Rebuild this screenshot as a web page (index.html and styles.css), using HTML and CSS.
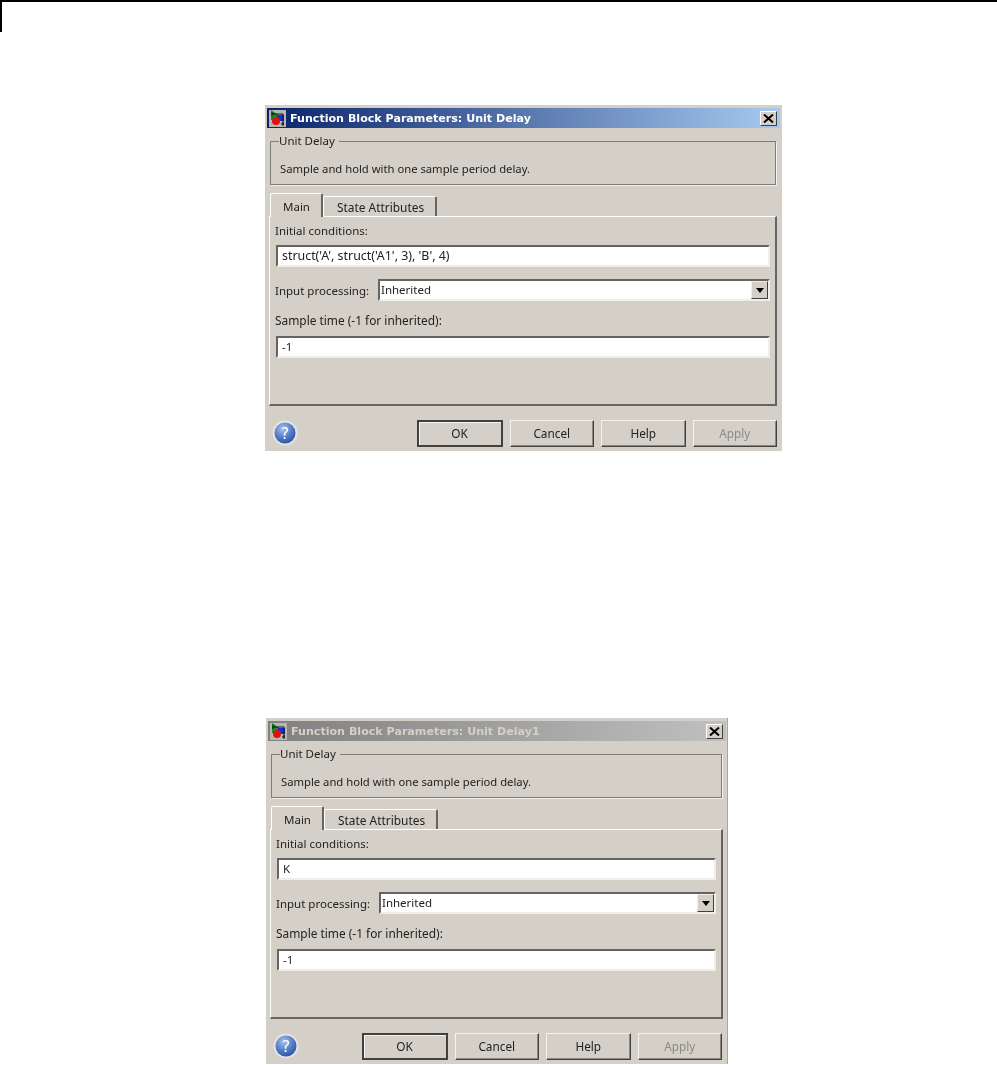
FILE: index.html
```html
<html>
  <head>
    <title>Function Block Parameters: Unit Delay</title>
    <link rel="stylesheet" href="styles.css">
  </head>
  <body>
    <div class="page-corner"></div>

    <!-- Active dialog -->
    <div class="dialog dialog-first">
      <div class="titlebar">
        <svg class="window-icon" width="17" height="17" viewBox="0 0 17 17">
          <rect width="17" height="17" fill="#b8b6b0"/>
          <path d="M2 0 L11 6 L11 10 L2 10 Z" fill="#1c8a2c"/>
          <rect x="8" y="5" width="7" height="6" fill="#1230d8"/>
          <circle cx="7" cy="11" r="4" fill="#e01010"/>
          <path d="M3 4 H14 V14 M12 14 H15 M14 12 V16 M3 2 V6" fill="none" stroke="#111" stroke-width="1"/>
        </svg>
        <span class="title-text">Function Block Parameters: Unit Delay</span>
        <span class="close-btn">
          <svg width="11" height="9" viewBox="0 0 11 9"><path d="M1 0.5 L10 8.5 M10 0.5 L1 8.5" stroke="#000" stroke-width="2"/></svg>
        </span>
      </div>
      <fieldset class="group">
        <legend>Unit Delay</legend>
        <p>Sample and hold with one sample period delay.</p>
      </fieldset>
      <div class="tabs">
        <div class="tab tab-active">Main</div>
        <div class="tab">State Attributes</div>
      </div>
      <div class="tab-panel">
        <div class="field-label">Initial conditions:</div>
        <div class="text-box text-box-long">struct('A', struct('A1', 3), 'B', 4)</div>
        <div class="select-row">
          <span class="select-label">Input processing:</span>
          <div class="text-box select-box">
            <span>Inherited</span>
            <span class="select-arrow"></span>
          </div>
        </div>
        <div class="field-label sample-label">Sample time (-1 for inherited):</div>
        <div class="text-box">-1</div>
      </div>
      <div class="button-row">
        <svg class="help-icon" width="26" height="26" viewBox="0 0 26 26">
          <defs>
            <radialGradient id="helpFill" cx="40%" cy="30%" r="75%">
              <stop offset="0" stop-color="#a9c2ea"/>
              <stop offset="0.6" stop-color="#4f79c4"/>
              <stop offset="1" stop-color="#2c4f9c"/>
            </radialGradient>
          </defs>
          <circle cx="13" cy="13" r="12.5" fill="#e4e4e6"/>
          <circle cx="13" cy="13" r="10.5" fill="url(#helpFill)"/>
          <text x="13" y="19" class="help-mark">?</text>
        </svg>
        <div class="btn btn-default">OK</div>
        <div class="btn">Cancel</div>
        <div class="btn">Help</div>
        <div class="btn btn-disabled">Apply</div>
      </div>
    </div>

    <!-- Inactive dialog -->
    <div class="dialog dialog-second">
      <div class="titlebar titlebar-inactive">
        <svg class="window-icon" width="17" height="17" viewBox="0 0 17 17">
          <rect width="17" height="17" fill="#b8b6b0"/>
          <path d="M2 0 L11 6 L11 10 L2 10 Z" fill="#1c8a2c"/>
          <rect x="8" y="5" width="7" height="6" fill="#1230d8"/>
          <circle cx="7" cy="11" r="4" fill="#e01010"/>
          <path d="M3 4 H14 V14 M12 14 H15 M14 12 V16 M3 2 V6" fill="none" stroke="#111" stroke-width="1"/>
        </svg>
        <span class="title-text">Function Block Parameters: Unit Delay1</span>
        <span class="close-btn">
          <svg width="11" height="9" viewBox="0 0 11 9"><path d="M1 0.5 L10 8.5 M10 0.5 L1 8.5" stroke="#000" stroke-width="2"/></svg>
        </span>
      </div>
      <fieldset class="group">
        <legend>Unit Delay</legend>
        <p>Sample and hold with one sample period delay.</p>
      </fieldset>
      <div class="tabs">
        <div class="tab tab-active">Main</div>
        <div class="tab">State Attributes</div>
      </div>
      <div class="tab-panel">
        <div class="field-label">Initial conditions:</div>
        <div class="text-box">K</div>
        <div class="select-row">
          <span class="select-label">Input processing:</span>
          <div class="text-box select-box">
            <span>Inherited</span>
            <span class="select-arrow"></span>
          </div>
        </div>
        <div class="field-label sample-label">Sample time (-1 for inherited):</div>
        <div class="text-box">-1</div>
      </div>
      <div class="button-row">
        <svg class="help-icon" width="26" height="26" viewBox="0 0 26 26">
          <circle cx="13" cy="13" r="12.5" fill="#e4e4e6"/>
          <circle cx="13" cy="13" r="10.5" fill="url(#helpFill)"/>
          <text x="13" y="19" class="help-mark">?</text>
        </svg>
        <div class="btn btn-default">OK</div>
        <div class="btn">Cancel</div>
        <div class="btn">Help</div>
        <div class="btn btn-disabled">Apply</div>
      </div>
    </div>
  </body>
</html>
```

FILE: styles.css
```css
/* Page */
body {
  margin: 0;
  background-color: #fff;
  font-family: "Noto Sans", sans-serif;
  font-size: 11.5px;
  color: #222;
}
.page-corner {
  height: 30px;
  border-top: 2px solid #000;
  border-left: 2px solid #000;
}

/* Dialog window */
.dialog {
  box-sizing: border-box;
  height: 346px;
  padding: 3px 2px 0;
  background-color: #d4d0c8;
  overflow: hidden;
  filter: blur(0.35px);
}
.dialog-first {
  width: 517px;
  margin: 73px 0 0 265px;
}
.dialog-second {
  width: 462px;
  margin: 267px 0 0 266px;
  padding-right: 1px;
  border-right: 1px solid #a8a6a2;
}
.dialog-second .button-row {
  padding-right: 4px;
}

/* Title bar */
.titlebar {
  display: flex;
  align-items: center;
  height: 20px;
  padding: 0 3px 0 2px;
  background: linear-gradient(to right, #0a246a, #a6caf0);
}
.titlebar-inactive {
  background: linear-gradient(to right, #808080, #c0c0c0);
}
.titlebar-inactive .title-text {
  color: #d4d0c8;
}
.window-icon {
  flex: none;
}
.title-text {
  margin-left: 4px;
  font-family: "DejaVu Sans", sans-serif;
  font-size: 11.1px;
  font-weight: bold;
  color: #fff;
  white-space: nowrap;
}
.close-btn {
  display: flex;
  align-items: center;
  justify-content: center;
  box-sizing: border-box;
  width: 17px;
  height: 15px;
  margin-left: auto;
  background-color: #d4d0c8;
  border: 1px solid;
  border-color: #fff #404040 #404040 #fff;
}

/* Description group */
.group {
  box-sizing: border-box;
  height: 51px;
  margin: 6px 4px 0 3px;
  padding: 0 0 0 9px;
  border: 1px solid #7d7d7a;
  box-shadow: 1px 1px 0 #f2f0ec;
}
.group legend {
  height: 14px;
  padding: 0 4px 0 0;
  margin-left: -1px;
  line-height: 14px;
}
.group p {
  margin: 13px 0 0;
  font-size: 11.25px;
  line-height: 16px;
}

/* Tabs */
.tabs {
  display: flex;
  align-items: flex-end;
  height: 24px;
  margin: 7px 0 0 3px;
}
.tab {
  box-sizing: border-box;
  height: 20px;
  padding: 2px 0 0 13px;
  width: 114px;
  font-size: 11.9px;
  line-height: 16px;
  border-top: 1px solid #fff;
  border-left: 1px solid #fff;
  border-right: 2px solid #66645f;
  border-radius: 2px 2px 0 0;
}
.tab-active {
  position: relative;
  height: 24px;
  width: 53px;
  padding: 5px 0 0 12px;
  margin-bottom: -1px;
  font-size: 11.5px;
  background-color: #d4d0c8;
}
.tab-panel {
  box-sizing: border-box;
  height: 190px;
  margin: 0 3px 0 2px;
  padding: 5px 5px 0;
  border-top: 1px solid #fff;
  border-left: 1px solid #fff;
  border-right: 2px solid #66645f;
  border-bottom: 2px solid #66645f;
}

/* Fields */
.field-label {
  height: 17px;
  line-height: 17px;
  margin-bottom: 6px;
}
.sample-label {
  margin-top: 11px;
  margin-bottom: 7px;
  font-size: 11.9px;
}
.text-box {
  box-sizing: border-box;
  height: 22px;
  margin-left: 1px;
  padding-left: 4px;
  line-height: 18px;
  background-color: #fff;
  border: 2px solid;
  border-color: #66645f #f0eee9 #f0eee9 #66645f;
  color: #222;
}
.text-box-long {
  font-size: 12.4px;
}
.select-row {
  display: flex;
  align-items: center;
  margin-top: 12px;
}
.select-row .select-label {
  flex: none;
  width: 102px;
}
.select-box {
  flex: 1;
  display: flex;
  align-items: center;
  justify-content: space-between;
  margin-left: 1px;
  padding: 0 0 0 1px;
}
.select-arrow {
  display: flex;
  align-items: center;
  justify-content: center;
  box-sizing: border-box;
  width: 17px;
  height: 18px;
  background-color: #d4d0c8;
  border: 1px solid;
  border-color: #f0eee9 #404040 #404040 #f0eee9;
}
.select-arrow::after {
  content: "";
  border-top: 5px solid #000;
  border-left: 4px solid transparent;
  border-right: 4px solid transparent;
}

/* Bottom buttons */
.button-row {
  display: flex;
  align-items: center;
  height: 28px;
  margin-top: 13px;
  gap: 7px;
  padding: 0 3px 0 5px;
}
.help-icon {
  flex: none;
  margin-right: auto;
}
.help-mark {
  font-family: "DejaVu Sans", sans-serif;
  font-size: 16px;
  fill: #fff;
  text-anchor: middle;
}
.btn {
  box-sizing: border-box;
  width: 84.5px;
  height: 27px;
  line-height: 25px;
  text-align: center;
  font-size: 11.8px;
  border: 1px solid;
  border-color: #f4f2ee #404040 #404040 #f4f2ee;
  box-shadow: inset -1px -1px 0 #8a8782;
}
.btn-default {
  width: 86px;
  border: 2px solid #404040;
  line-height: 23px;
  box-shadow: inset 1px 1px 0 #f4f2ee;
}
.btn-disabled {
  color: #8c8a86;
}
```
